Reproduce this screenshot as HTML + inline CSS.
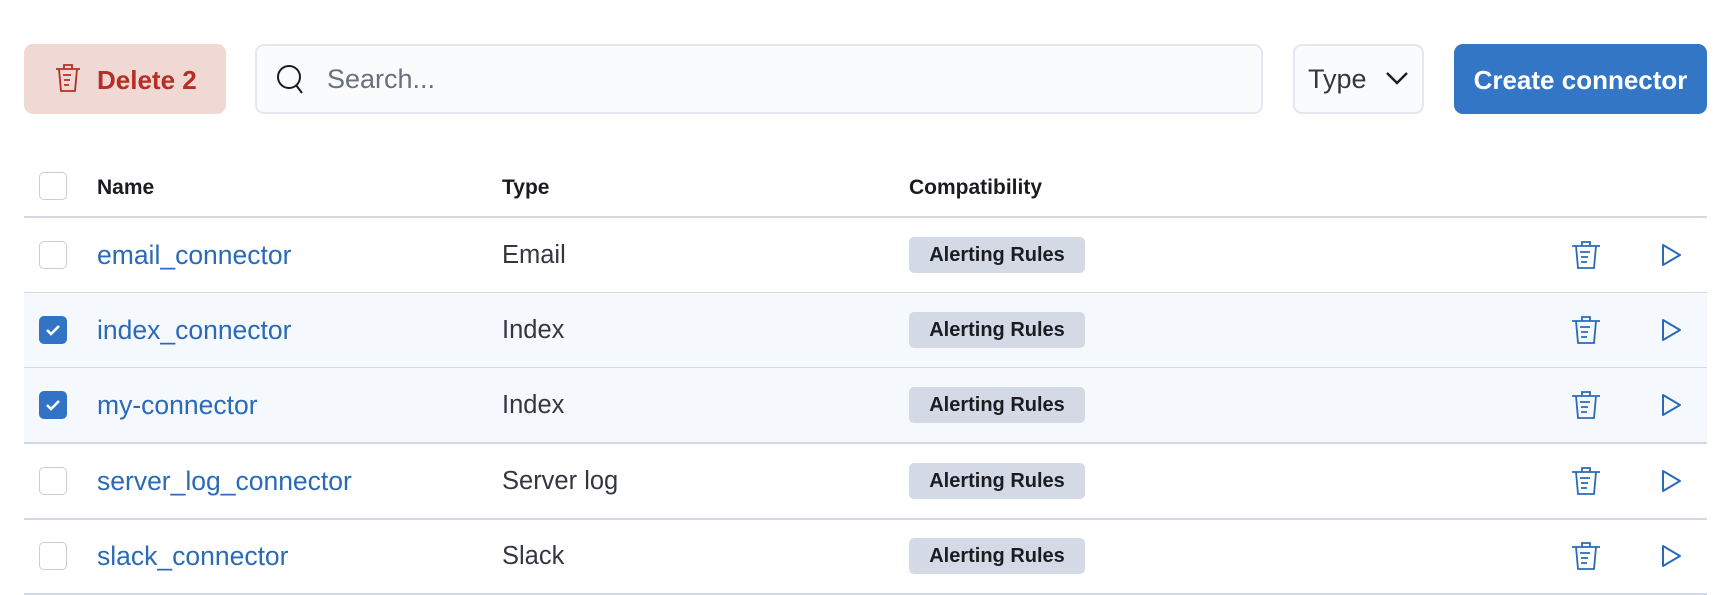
<!DOCTYPE html>
<html><head><style>
body{margin:0;width:1730px;height:595px;background:#fff;font-family:"Liberation Sans",sans-serif;position:relative;overflow:hidden}
.a{position:absolute}
.btn{top:44px;height:70px;border-radius:9px;box-sizing:border-box}
.row{position:absolute;left:24px;width:1683px;height:75px;border-bottom:2px solid #d3dae6;box-sizing:border-box}
.sel{background:#f5f8fc}
.cb{position:absolute;left:15px;width:28px;height:28px;border:1px solid #c9ced6;border-radius:5px;box-sizing:border-box;background:#fff}
.cb.on{background:#3273c5;border-color:#3273c5}
.t{position:absolute;font-size:25.5px;line-height:26px}
.name{left:73px;color:#2a6ab8;font-size:26.5px}
.type{left:478px;color:#343741}
.badge{position:absolute;left:885px;width:176px;height:36px;background:#d3dae6;border-radius:5px;font-size:20px;line-height:36px;text-align:center;color:#1a1c21;font-weight:bold}
.ic{position:absolute}
</style></head><body>
<div class="a btn" style="left:24px;width:202px;background:#f0d8d5"></div>
<svg class="a" style="left:55px;top:63px" width="26" height="30" viewBox="0 0 26 30" fill="none" stroke="#b42f24" stroke-width="1.8"><path d="M1 6h24M9 6V2h8v4M4 6l2 22h14l2-22M8 12h8M9 17h6M9 22h5"/></svg>
<div class="a" style="left:97px;top:65px;font-size:26px;color:#b42f24;font-weight:bold">Delete 2</div>
<div class="a btn" style="left:255px;width:1008px;background:#fafbfd;border:2px solid #e3e7ef"></div>
<svg class="a" style="left:276px;top:64px" width="30" height="30" viewBox="0 0 30 30" fill="none" stroke="#1a1c21" stroke-width="2"><circle cx="13" cy="13" r="11"/><path d="M20 21l6 8"/></svg>
<div class="a" style="left:327px;top:64px;font-size:27px;color:#69707d">Search...</div>
<div class="a btn" style="left:1293px;width:131px;background:#fafbfd;border:2px solid #e3e7ef"></div>
<div class="a" style="left:1308px;top:64px;font-size:27px;color:#343741">Type</div>
<svg class="a" style="left:1385px;top:71px" width="24" height="14" viewBox="0 0 24 14" fill="none" stroke="#1a1c21" stroke-width="2.4"><path d="M2 2l10 10 10-10"/></svg>
<div class="a btn" style="left:1454px;width:253px;background:#3476c6"></div>
<div class="a" style="left:1454px;width:253px;top:65px;font-size:26px;color:#fff;font-weight:bold;text-align:center">Create connector</div>

<div class="row" style="top:141px;height:77px">
<div class="cb" style="top:31px"></div>
<div class="t" style="left:73px;top:34px;font-size:21px;font-weight:bold;color:#1a1c21">Name</div>
<div class="t" style="left:478px;top:34px;font-size:21px;font-weight:bold;color:#1a1c21">Type</div>
<div class="t" style="left:885px;top:34px;font-size:21px;font-weight:bold;color:#1a1c21">Compatibility</div>
</div>

<div id="rows"></div>
<script>
var d=[["email_connector","Email",0],["index_connector","Index",1],["my-connector","Index",1],["server_log_connector","Server log",0],["slack_connector","Slack",0]];
var h="";d.forEach(function(r,i){var top=218+i*75.2;
h+='<div class="row'+(r[2]?' sel':'')+'" style="top:'+top+'px;height:76px"><div class="cb'+(r[2]?' on':'')+'" style="top:23px">'+(r[2]?'<svg width="26" height="26" viewBox="0 0 26 26" fill="none" stroke="#fff" stroke-width="2.6"><path d="M7 13l4 4 8-8"/></svg>':'')+'</div>'+
'<div class="t name" style="top:24px">'+r[0]+'</div><div class="t type" style="top:24px">'+r[1]+'</div><div class="badge" style="top:19px">Alerting Rules</div>'+
'<svg class="ic" style="left:1547px;top:22px" width="30" height="30" viewBox="0 0 30 30" fill="none" stroke="#2a6ab8" stroke-width="1.8"><path d="M1 6h28M11 6V2h8v4M5 6l2 22h16l2-22M9 12h10M10 17h7M10 22h6"/></svg>'+
'<svg class="ic" style="left:1636px;top:25px" width="22" height="24" viewBox="0 0 22 24" fill="none" stroke="#2a6ab8" stroke-width="2" stroke-linejoin="round"><path d="M3 2v20l17-10z"/></svg></div>';});
document.getElementById("rows").innerHTML=h;
</script>
</body></html>
